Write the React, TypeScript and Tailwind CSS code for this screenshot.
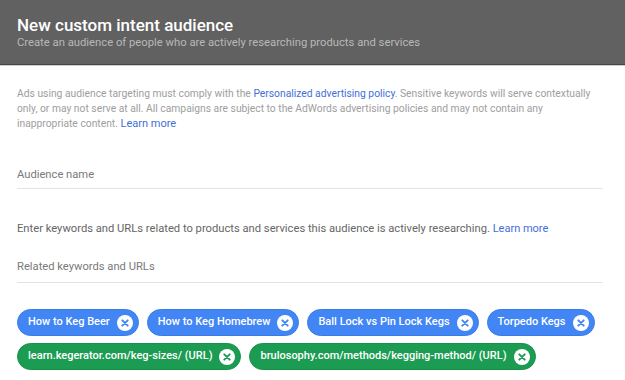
import React from "react";

const XIcon = ({ color }: { color: string }) => (
  <span className="flex h-[16px] w-[16px] shrink-0 items-center justify-center rounded-full bg-white">
    <svg width="8" height="8" viewBox="0 0 8 8">
      <path d="M1.3 1.3 L6.7 6.7 M6.7 1.3 L1.3 6.7" stroke={color} strokeWidth="1.9" strokeLinecap="round" />
    </svg>
  </span>
);

const Chip = ({ label, green }: { label: string; green?: boolean }) => (
  <div
    className={`flex h-[27px] items-center gap-[7px] whitespace-nowrap rounded-full border pl-[10px] pr-[5px] text-[11px] font-medium text-white ${
      green ? "border-[#17904a] bg-[#1c9c52]" : "border-[#3b7be8] bg-[#4285f4]"
    }`}
  >
    <span>{label}</span>
    <XIcon color={green ? "#1c9c52" : "#4285f4"} />
  </div>
);

export default function App() {
  return (
    <div className="h-[380px] w-[625px] overflow-hidden bg-white" style={{ fontFamily: "Roboto, 'Liberation Sans', sans-serif" }}>
      <div className="h-[64px] bg-[#616161] px-[17px] pt-[14px]">
        <div className="text-[17px] font-medium leading-[22px] text-white">New custom intent audience</div>
        <div className="text-[11.25px] leading-[13px] text-[#b8b8b8]">Create an audience of people who are actively researching products and services</div>
      </div>
      <div className="h-[1px] bg-[#454545]" />
      <div className="h-[1px] bg-[#cfcfcf]" />
      <div className="pl-[17px] pr-[22px]">
        <p className="mt-[20px] text-[10.3px] leading-[15px] text-[#9e9e9e]">
          Ads using audience targeting must comply with the <span className="text-[#3f6fd8]">Personalized advertising policy</span>. Sensitive keywords will serve contextually
          <br />
          only, or may not serve at all. All campaigns are subject to the AdWords advertising policies and may not contain any
          <br />
          inappropriate content. <span className="text-[11px] text-[#3f6fd8]">Learn more</span>
        </p>
        <div className="mt-[36px] border-b border-[#e3e3e3] pb-[5px] text-[11.2px] leading-[16px] text-[#7a7a7a]">Audience name</div>
        <div className="mt-[32px] text-[11.2px] leading-[16px] text-[#666666]">
          Enter keywords and URLs related to products and services this audience is actively researching. <span className="text-[11px] text-[#3f6fd8]">Learn more</span>
        </div>
        <div className="mt-[22px] border-b border-[#e3e3e3] pb-[7px] text-[11.2px] leading-[16px] text-[#7a7a7a]">Related keywords and URLs</div>
        <div className="mt-[26px] flex flex-wrap gap-x-[8px] gap-y-[7px]">
          <Chip label="How to Keg Beer" />
          <Chip label="How to Keg Homebrew" />
          <Chip label="Ball Lock vs Pin Lock Kegs" />
          <Chip label="Torpedo Kegs" />
          <Chip label="learn.kegerator.com/keg-sizes/ (URL)" green />
          <Chip label="brulosophy.com/methods/kegging-method/ (URL)" green />
        </div>
      </div>
    </div>
  );
}
